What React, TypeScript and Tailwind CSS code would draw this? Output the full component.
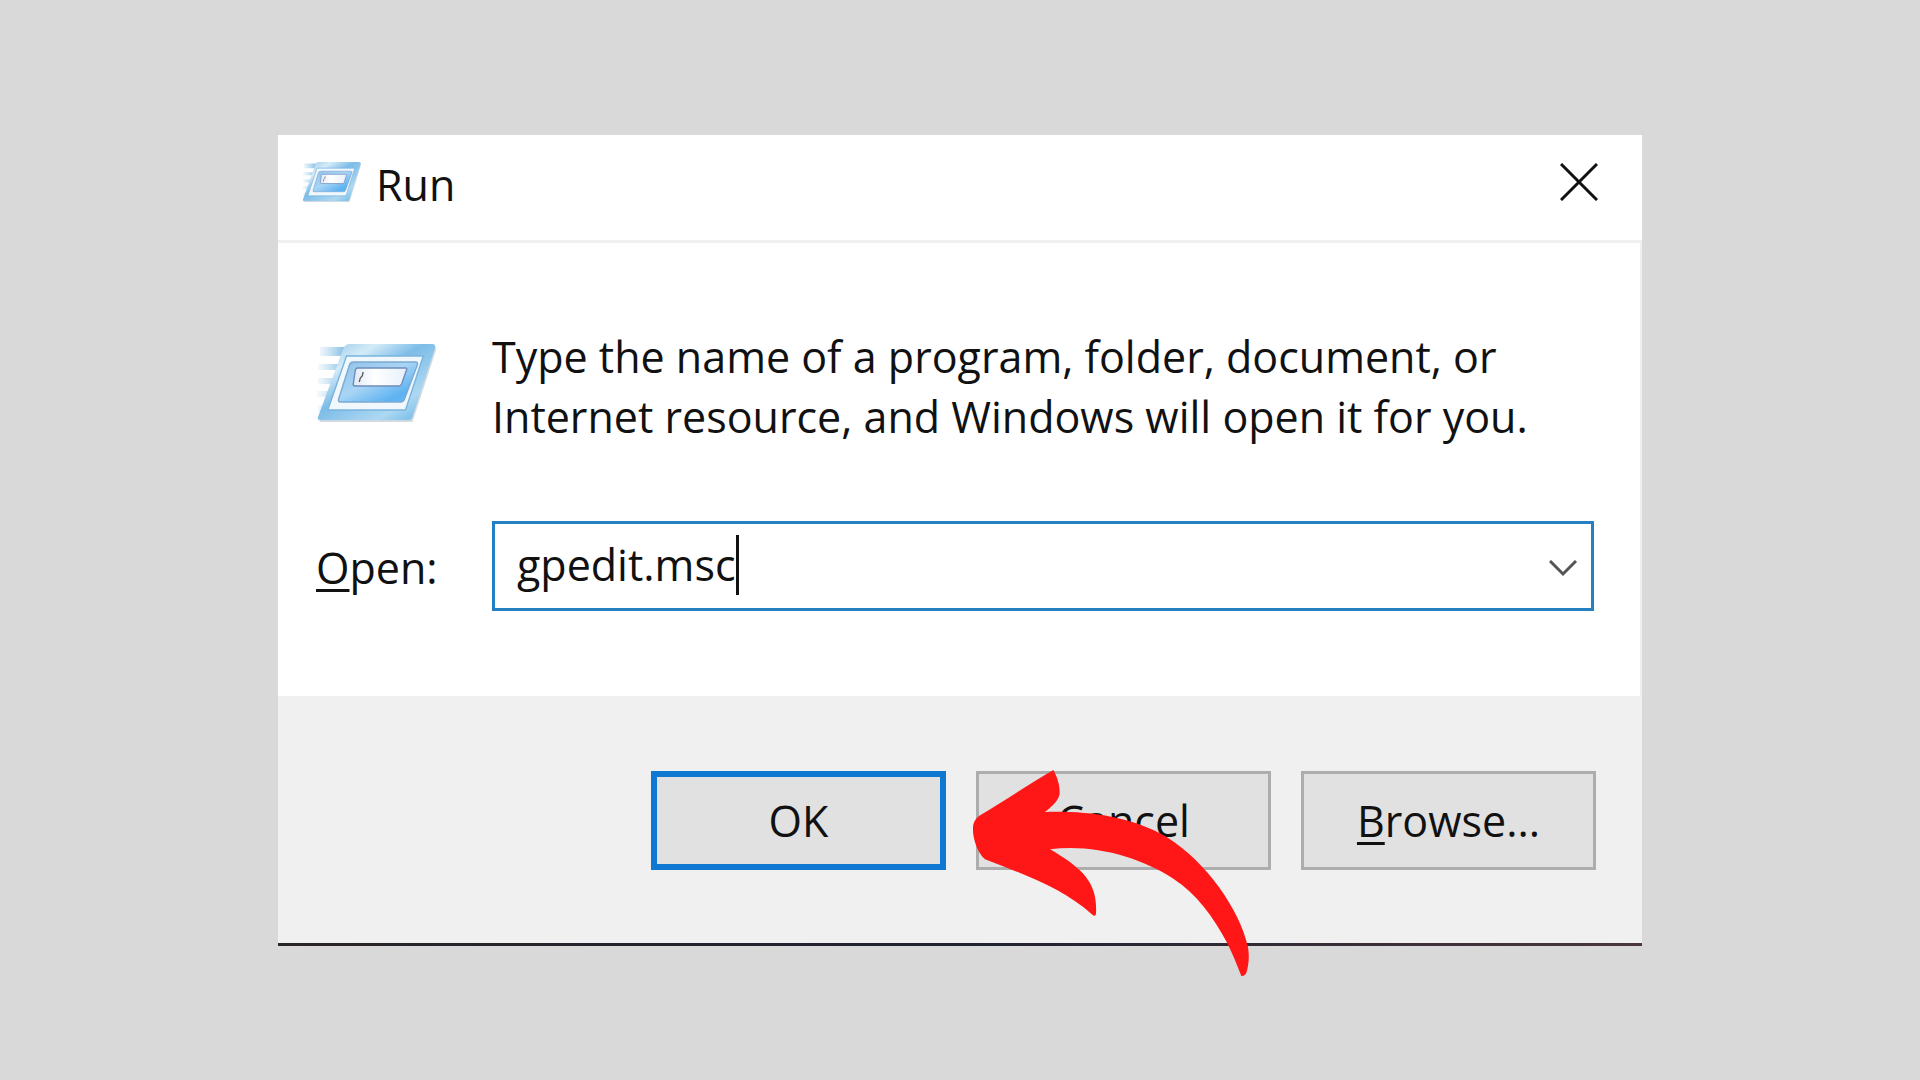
import { useId, useState } from "react";
import type { ReactNode } from "react";
import clsx from "clsx";

function RunIcon({ className }: { className?: string }) {
  const id = useId();
  const frame = `${id}-frame`;
  const panel = `${id}-panel`;
  const field = `${id}-field`;
  const trail = `${id}-trail`;

  return (
    <svg viewBox="16 22 124 82" preserveAspectRatio="none" className={className} aria-hidden="true">
      <defs>
        <linearGradient id={frame} x1="0" y1="0" x2="1" y2="1">
          <stop offset="0" stopColor="#8fc2e4" />
          <stop offset="0.25" stopColor="#d3ebf8" />
          <stop offset="0.45" stopColor="#7dbce8" />
          <stop offset="0.75" stopColor="#add8f2" />
          <stop offset="1" stopColor="#5aaee6" />
        </linearGradient>
        <linearGradient id={panel} x1="0" y1="0" x2="1" y2="1">
          <stop offset="0" stopColor="#8fc1e8" />
          <stop offset="0.45" stopColor="#a9d5f5" />
          <stop offset="0.8" stopColor="#5db2f2" />
          <stop offset="1" stopColor="#6fbdf3" />
        </linearGradient>
        <linearGradient id={field} x1="0" y1="0" x2="1" y2="0">
          <stop offset="0" stopColor="#dfe9f7" />
          <stop offset="0.4" stopColor="#ffffff" />
          <stop offset="1" stopColor="#e6f0fb" />
        </linearGradient>
        <linearGradient id={trail} gradientUnits="userSpaceOnUse" x1="17" y1="0" x2="46" y2="0">
          <stop offset="0" stopColor="#a8d3ee" stopOpacity="0.1" />
          <stop offset="1" stopColor="#7fbbe2" />
        </linearGradient>
      </defs>
      <path
        d="M20 27H46L43 36H20ZM18 44H41L39 50H18ZM18 58H37L34 64H18ZM17 71H32L30 77H17ZM18 85H27L24 92H18Z"
        fill={`url(#${trail})`}
      />
      <path d="M48 26H137L138 30L114 102H20L19 99Z" fill="#7d93a3" opacity="0.35" />
      <path
        d="M50 24H134Q138 24 137 28L114 97Q113 100 110 100H20Q17 100 18 97L44 28Q46 24 50 24Z"
        fill={`url(#${frame})`}
      />
      <path d="M47 36H125L107 90H28Z" fill="#f1f8fd" stroke="#79b4dd" strokeWidth="1.4" />
      <path
        d="M54 42H117Q120 42 119 45L106 79Q105 82 102 82H41Q38 82 39 79L50 45Q51 42 54 42Z"
        fill={`url(#${panel})`}
        stroke="#7ca9d3"
        strokeWidth="1.4"
      />
      <path
        d="M58 48H107Q109 48 108 50L103 64Q102 66 100 66H56Q53 66 54 63L56 50Q57 48 58 48Z"
        fill={`url(#${field})`}
        stroke="#6f8cbb"
        strokeWidth="1.4"
      />
      <path d="M64 52L63 56L61 58L60 62" fill="none" stroke="#555" strokeWidth="1.3" />
    </svg>
  );
}

function PointerArrow({ className }: { className?: string }) {
  return (
    <svg viewBox="96 56 834 624" className={className} aria-hidden="true">
      <path
        fill="#ff1616"
        d="M340 59C352 80 360 105 359 130C356 150 335 170 314 185C440 182 565 195 680 260C800 335 900 480 924 590C928 620 927 640 919 668C915 675 910 678 904 677C890 640 875 605 860 575C820 500 770 430 700 385C600 320 460 280 330 297C370 320 400 340 430 370C465 410 470 450 468 490C466 497 463 498 458 494C370 415 260 375 135 327C110 305 98 260 99 235C99 220 103 208 118 196C190 155 260 105 340 59Z"
      />
    </svg>
  );
}

function DialogButton({ primary, children }: { primary?: boolean; children: ReactNode }) {
  return (
    <button
      type="button"
      className={clsx(
        "h-[99px] w-[295px] bg-[#e1e1e1] pt-0.5",
        primary ? "border-[6px] border-[#0f78d0]" : "border-[3px] border-[#adadad]"
      )}
    >
      {children}
    </button>
  );
}

const underline = "underline decoration-[3px] underline-offset-[5px]";

export default function App() {
  const [command, setCommand] = useState("gpedit.msc");

  return (
    <main className="flex min-h-screen items-center justify-center bg-[#d9d9d9] font-['Open_Sans','Noto_Sans',sans-serif] text-[43px] leading-[60px] text-[#111]">
      <section aria-label="Run" className="w-full max-w-[1364px] bg-white">
        <header className="flex h-[108px] items-center border-b-[3px] border-[#f0f0f0] pr-[44px] pb-[10px] pl-6">
          <RunIcon className="h-[42px] w-[60px]" />
          <h1 className="ml-[14px] pt-1.5">Run</h1>
          <button type="button" aria-label="Close" className="ml-auto">
            <svg viewBox="0 0 38 38" className="size-[38px]" aria-hidden="true">
              <path d="M1 1L37 37M37 1L1 37" stroke="#111" strokeWidth="3" />
            </svg>
          </button>
        </header>

        <div className="border-r-2 border-[#efefef] pt-[84px] pr-[46px] pb-[85px] pl-[38px]">
          <div className="flex">
            <RunIcon className="mt-[15px] h-[82px] w-[122px] shrink-0" />
            <p className="ml-[54px]">
              Type the name of a program, folder, document, or
              <br />
              Internet resource, and Windows will open it for you.
            </p>
          </div>

          <div className="mt-[74px] flex items-center">
            <label htmlFor="command" className="w-[176px] shrink-0 pt-1">
              <span className={underline}>O</span>pen:
            </label>
            <div className="flex h-[90px] flex-1 items-center border-[3px] border-[#2580c3] pr-[14px] pb-0.5 pl-[22px]">
              <input
                id="command"
                type="text"
                value={command}
                onChange={(event) => setCommand(event.target.value)}
                className="field-sizing-content caret-transparent outline-none"
              />
              <span className="h-[60px] w-[3px] bg-[#111]" />
              <button type="button" aria-label="Show recent commands" className="ml-auto pt-2">
                <svg viewBox="0 0 28 17" className="h-[17px] w-[28px]" aria-hidden="true">
                  <path d="M1 1L14 14L27 1" fill="none" stroke="#555" strokeWidth="3" />
                </svg>
              </button>
            </div>
          </div>
        </div>

        <footer className="flex justify-end gap-[30px] bg-[#f0f0f0] pt-[75px] pr-[46px] pb-[73px]">
          <DialogButton primary>OK</DialogButton>
          <div className="relative">
            <DialogButton>Cancel</DialogButton>
            <PointerArrow className="pointer-events-none absolute -top-0.5 -left-1 w-[278px]" />
          </div>
          <DialogButton>
            <span className={underline}>B</span>rowse...
          </DialogButton>
        </footer>
        <div className="h-[3px] bg-linear-to-r from-[#2a2528] via-[#1f2230] to-[#4b363d]" />
      </section>
    </main>
  );
}
